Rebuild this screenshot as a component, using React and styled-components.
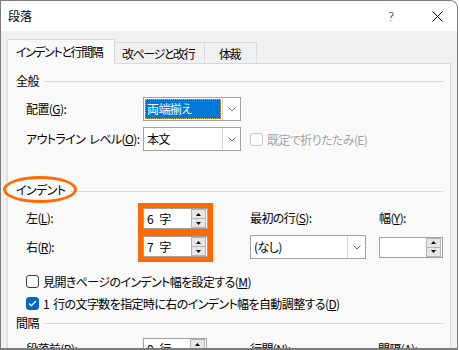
import React from "react";
import styled, { createGlobalStyle } from "styled-components";

const GlobalStyle = createGlobalStyle`
  html, body {
    margin: 0;
    padding: 0;
    background: #ffffff;
  }
  body {
    font-family: "Noto Sans CJK JP", "Noto Sans", sans-serif;
    font-size: 12px;
    color: #000000;
    font-feature-settings: "palt";
    letter-spacing: -0.6px;
    word-spacing: 2px;
  }
`;

const ORANGE = "#ff6a00";

const Window = styled.div`
  box-sizing: border-box;
  width: 458px;
  height: 350px;
  border: 1px solid #7d7d7d;
  border-bottom-width: 2px;
  border-top-right-radius: 8px;
  overflow: hidden;
  display: flex;
  flex-direction: column;
  background: #f0f0f0;
`;

const TitleBar = styled.div`
  height: 30px;
  flex: none;
  display: flex;
  align-items: center;
  padding-left: 7px;
  background: #ffffff;
`;

const Title = styled.span`
  font-size: 12px;
  line-height: 16px;
  margin-top: -1px;
  letter-spacing: 0;
`;

const TitleButtons = styled.div`
  margin-left: auto;
  display: flex;
  gap: 6px;
  height: 100%;
`;

const TitleButton = styled.div`
  width: 40px;
  height: 100%;
  display: flex;
  align-items: center;
  justify-content: center;
  font-family: "DejaVu Sans", sans-serif;
  font-size: 13px;
  font-weight: 300;
`;

const Body = styled.div`
  flex: 1;
  padding: 8px 0 0 6px;
  overflow: hidden;
`;

const TabRow = styled.div`
  display: flex;
  align-items: flex-end;
  height: 24px;
`;

const Tab = styled.div`
  box-sizing: border-box;
  width: ${(p) => p.$w}px;
  height: ${(p) => (p.$active ? 25 : 21)}px;
  margin-bottom: ${(p) => (p.$active ? -1 : 0)}px;
  position: relative;
  z-index: ${(p) => (p.$active ? 1 : 0)};
  display: flex;
  align-items: center;
  padding-left: ${(p) => p.$pl}px;
  padding-bottom: ${(p) => (p.$active ? 2 : 0)}px;
  background: ${(p) => (p.$active ? "#f9f9f9" : "#f0f0f0")};
  border: 1px solid #d9d9d9;
  border-bottom: none;
  border-left: ${(p) => (p.$first ? "1px solid #d9d9d9" : "none")};
  white-space: nowrap;
  letter-spacing: -1.4px;
`;

const Panel = styled.div`
  box-sizing: border-box;
  width: 444px;
  min-height: 400px;
  border: 1px solid #d9d9d9;
  background: #f9f9f9;
  padding: 9px 6px 0 8px;
  display: flex;
  flex-direction: column;
`;

const SectionHeader = styled.div`
  position: relative;
  display: flex;
  align-items: center;
  gap: 5px;
  height: 16px;
  margin-top: ${(p) => p.$mt || 0}px;
  line-height: 16px;
`;

const Rule = styled.div`
  flex: 1;
  height: 1px;
  background: #dcdcdc;
  margin-top: ${(p) => p.$offset || 0}px;
`;

const Ellipse = styled.div`
  position: absolute;
  left: -13px;
  top: -6px;
  width: 74px;
  height: 27px;
  box-sizing: border-box;
  border: 3px solid ${ORANGE};
  border-radius: 50%;
  pointer-events: none;
`;

const Row = styled.div`
  display: flex;
  align-items: center;
  padding-left: 10px;
  margin-top: ${(p) => p.$mt || 0}px;
`;

const Label = styled.span`
  width: ${(p) => (p.$w ? `${p.$w}px` : "auto")};
  flex: none;
  line-height: 16px;
  white-space: nowrap;
  color: ${(p) => (p.$disabled ? "#a3a3a3" : "#000")};
`;

const SelectBox = styled.div`
  box-sizing: border-box;
  width: ${(p) => p.$w}px;
  height: 24px;
  border: 1px solid #a2a2a2;
  background: #ffffff;
  display: flex;
  flex: none;
`;

const SelectValue = styled.div`
  flex: 1;
  display: flex;
  align-items: center;
  padding: 1px;
  line-height: 16px;
`;

const Highlight = styled.span`
  flex: 1;
  align-self: stretch;
  display: flex;
  align-items: center;
  padding-left: 2px;
  background: #0078d7;
  color: #ffffff;
  outline: 1px dotted #d9a54a;
  outline-offset: -1px;
`;

const PlainValue = styled.span`
  padding-left: 2px;
`;

const DropButton = styled.div`
  width: 17px;
  flex: none;
  border-left: 1px solid #d4d4d4;
  display: flex;
  align-items: center;
  justify-content: center;
  background: #ffffff;
`;

const SpinBox = styled.div`
  box-sizing: border-box;
  width: ${(p) => p.$w || 65}px;
  height: 21px;
  border: 1px solid #a2a2a2;
  background: #ffffff;
  display: flex;
  flex: none;
`;

const SpinValue = styled.div`
  flex: 1;
  display: flex;
  align-items: center;
  padding-left: 3px;
  line-height: 16px;
  letter-spacing: 0;
  word-spacing: 3px;
`;

const SpinButtons = styled.div`
  width: 15px;
  margin: 0 1px 0 0;
  display: flex;
  flex-direction: column;
`;

const SpinButton = styled.div`
  flex: 1;
  box-sizing: border-box;
  border: 1px solid #b4b4b4;
  border-top-width: ${(p) => (p.$down ? 0 : 1)}px;
  background: #e6e6e6;
  display: flex;
  align-items: center;
  justify-content: center;
`;

const IndentGrid = styled.div`
  display: grid;
  grid-template-columns: 112px 112px 129px 64px;
  grid-template-rows: 29px 30px;
  padding-left: 10px;
  margin-top: 5px;
  align-items: center;
`;

const Cell = styled.div`
  grid-column: ${(p) => p.$col};
  grid-row: ${(p) => p.$row};
  display: flex;
  align-items: center;
`;

const OrangeFrame = styled.div`
  grid-column: 2;
  grid-row: 1 / 3;
  align-self: stretch;
  width: 75px;
  box-sizing: border-box;
  padding: 5px;
  background: ${ORANGE};
  display: flex;
  flex-direction: column;
  gap: 7px;
`;

const CheckRow = styled.label`
  display: flex;
  align-items: center;
  gap: 4px;
  padding-left: 10px;
  height: 16px;
  margin-top: ${(p) => p.$mt || 0}px;
  margin-left: ${(p) => p.$ml || 0}px;
  white-space: nowrap;
  color: ${(p) => (p.$disabled ? "#a3a3a3" : "#000")};
`;

const Box = styled.span`
  box-sizing: border-box;
  width: 13px;
  height: 13px;
  flex: none;
  border-radius: 3px;
  border: 1px solid ${(p) => (p.$checked ? "#0067c0" : p.$disabled ? "#c8c8c8" : "#3c3c3c")};
  background: ${(p) => (p.$checked ? "#0067c0" : p.$disabled ? "#fbfbfb" : "#ffffff")};
  display: flex;
  align-items: center;
  justify-content: center;
`;

const SpacingGrid = styled.div`
  display: grid;
  grid-template-columns: 117px 107px 128px 64px;
  padding-left: 10px;
  margin-top: 7px;
  align-items: center;
`;

function Chevron() {
  return (
    <svg width="8" height="5" viewBox="0 0 8 5">
      <polyline points="0.5,0.5 4,4 7.5,0.5" fill="none" stroke="#707070" strokeWidth="1" />
    </svg>
  );
}

function Triangle({ down }) {
  return (
    <svg width="5" height="3" viewBox="0 0 5 3">
      <polygon points={down ? "0,0 5,0 2.5,3" : "2.5,0 5,3 0,3"} fill="#000" />
    </svg>
  );
}

function Select({ width, value, selected }) {
  return (
    <SelectBox $w={width}>
      <SelectValue>
        {selected ? <Highlight>{value}</Highlight> : <PlainValue>{value}</PlainValue>}
      </SelectValue>
      <DropButton>
        <Chevron />
      </DropButton>
    </SelectBox>
  );
}

function Spin({ value, width }) {
  return (
    <SpinBox $w={width}>
      <SpinValue>{value}</SpinValue>
      <SpinButtons>
        <SpinButton>
          <Triangle />
        </SpinButton>
        <SpinButton $down>
          <Triangle down />
        </SpinButton>
      </SpinButtons>
    </SpinBox>
  );
}

function Checkbox({ checked, disabled, children, mt, ml }) {
  return (
    <CheckRow $mt={mt} $ml={ml} $disabled={disabled}>
      <Box $checked={checked} $disabled={disabled}>
        {checked && (
          <svg width="9" height="7" viewBox="0 0 9 7">
            <polyline points="1,3.5 3.3,5.8 8,1" fill="none" stroke="#fff" strokeWidth="1.3" />
          </svg>
        )}
      </Box>
      <span>{children}</span>
    </CheckRow>
  );
}

export default function App() {
  return (
    <>
      <GlobalStyle />
      <Window>
        <TitleBar>
          <Title>段落</Title>
          <TitleButtons>
            <TitleButton>?</TitleButton>
            <TitleButton>
              <svg width="11" height="11" viewBox="0 0 11 11">
                <path d="M0.5 0.5 L10.5 10.5 M10.5 0.5 L0.5 10.5" stroke="#000" strokeWidth="1" />
              </svg>
            </TitleButton>
          </TitleButtons>
        </TitleBar>
        <Body>
          <TabRow>
            <Tab $active $first $w={108} $pl={8}>
              インデントと行間隔
            </Tab>
            <Tab $w={90} $pl={7}>
              改ページと改行
            </Tab>
            <Tab $w={52} $pl={14}>
              体裁
            </Tab>
          </TabRow>
          <Panel>
            <SectionHeader>
              <span>全般</span>
              <Rule />
            </SectionHeader>
            <Row $mt={8}>
              <Label $w={117}>
                配置(<u>G</u>):
              </Label>
              <Select width={98} value="両端揃え" selected />
            </Row>
            <Row $mt={6}>
              <Label $w={117}>
                アウトライン レベル(<u>O</u>):
              </Label>
              <Select width={98} value="本文" />
              <Checkbox disabled ml={-1}>
                既定で折りたたみ(E)
              </Checkbox>
            </Row>
            <SectionHeader $mt={31}>
              <Ellipse />
              <span>インデント</span>
              <Rule $offset={2} />
            </SectionHeader>
            <IndentGrid>
              <Cell $col={1} $row={1}>
                <Label>
                  左(<u>L</u>):
                </Label>
              </Cell>
              <OrangeFrame>
                <Spin value="6 字" />
                <Spin value="7 字" />
              </OrangeFrame>
              <Cell $col={3} $row={1}>
                <Label>
                  最初の行(<u>S</u>):
                </Label>
              </Cell>
              <Cell $col={4} $row={1}>
                <Label>
                  幅(<u>Y</u>):
                </Label>
              </Cell>
              <Cell $col={1} $row={2}>
                <Label>
                  右(<u>R</u>):
                </Label>
              </Cell>
              <Cell $col={3} $row={2}>
                <Select width={116} value="(なし)" />
              </Cell>
              <Cell $col={4} $row={2}>
                <Spin value="" width={64} />
              </Cell>
            </IndentGrid>
            <Checkbox mt={11}>
              見開きページのインデント幅を設定する(<u>M</u>)
            </Checkbox>
            <Checkbox checked mt={6}>
              1 行の文字数を指定時に右のインデント幅を自動調整する(<u>D</u>)
            </Checkbox>
            <SectionHeader $mt={4}>
              <span>間隔</span>
              <Rule />
            </SectionHeader>
            <SpacingGrid>
              <Label>
                段落前(<u>B</u>):
              </Label>
              <Spin value="0 行" width={64} />
              <Label>
                行間(<u>N</u>):
              </Label>
              <Label>
                間隔(<u>A</u>):
              </Label>
            </SpacingGrid>
          </Panel>
        </Body>
      </Window>
    </>
  );
}
